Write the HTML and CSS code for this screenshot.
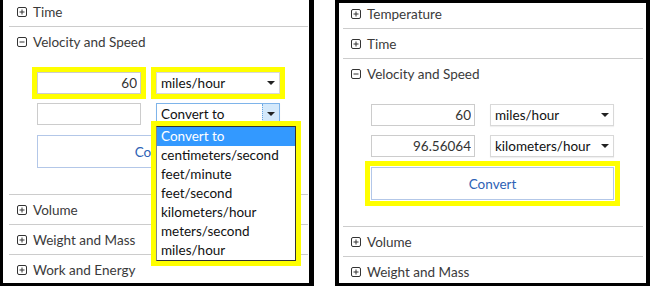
FILE: index.html
```html
<!DOCTYPE html>
<html lang="en">
<head>
  <meta charset="UTF-8">
  <title>Unit Converter - Velocity and Speed</title>
  <link rel="stylesheet" href="styles.css">
</head>
<body>

<div class="shots">

  <!-- before: choosing the target unit -->
  <div class="panel panel-left">
    <div class="accordion">
      <div class="section">
        <div class="head">
          <svg class="icon" viewBox="0 0 10 10"><rect x="0.5" y="0.5" width="9" height="9" rx="1.5"/><path d="M2.5 5h5M5 2.5v5"/></svg>
          Time
        </div>
      </div>
      <div class="section open">
        <div class="head">
          <svg class="icon" viewBox="0 0 10 10"><rect x="0.5" y="0.5" width="9" height="9" rx="1.5"/><path d="M2.5 5h5"/></svg>
          Velocity and Speed
        </div>
        <div class="body">
          <div class="fields">
            <input class="num mark" type="text" value="60">
            <div class="select mark"><span>miles/hour</span><i class="caret"></i></div>
            <input class="num" type="text" value="">
            <div class="select focus">
              <span>Convert to</span><i class="caret"></i>
              <ul class="options">
                <li class="active">Convert to</li>
                <li>centimeters/second</li>
                <li>feet/minute</li>
                <li>feet/second</li>
                <li>kilometers/hour</li>
                <li>meters/second</li>
                <li>miles/hour</li>
              </ul>
            </div>
            <button class="convert" type="button">Convert</button>
          </div>
        </div>
      </div>
      <div class="section">
        <div class="head">
          <svg class="icon" viewBox="0 0 10 10"><rect x="0.5" y="0.5" width="9" height="9" rx="1.5"/><path d="M2.5 5h5M5 2.5v5"/></svg>
          Volume
        </div>
      </div>
      <div class="section">
        <div class="head">
          <svg class="icon" viewBox="0 0 10 10"><rect x="0.5" y="0.5" width="9" height="9" rx="1.5"/><path d="M2.5 5h5M5 2.5v5"/></svg>
          Weight and Mass
        </div>
      </div>
      <div class="section">
        <div class="head">
          <svg class="icon" viewBox="0 0 10 10"><rect x="0.5" y="0.5" width="9" height="9" rx="1.5"/><path d="M2.5 5h5M5 2.5v5"/></svg>
          Work and Energy
        </div>
      </div>
    </div>
  </div>

  <!-- after: result shown -->
  <div class="panel panel-right">
    <div class="accordion">
      <div class="section">
        <div class="head">
          <svg class="icon" viewBox="0 0 10 10"><rect x="0.5" y="0.5" width="9" height="9" rx="1.5"/><path d="M2.5 5h5M5 2.5v5"/></svg>
          Temperature
        </div>
      </div>
      <div class="section">
        <div class="head">
          <svg class="icon" viewBox="0 0 10 10"><rect x="0.5" y="0.5" width="9" height="9" rx="1.5"/><path d="M2.5 5h5M5 2.5v5"/></svg>
          Time
        </div>
      </div>
      <div class="section open">
        <div class="head">
          <svg class="icon" viewBox="0 0 10 10"><rect x="0.5" y="0.5" width="9" height="9" rx="1.5"/><path d="M2.5 5h5"/></svg>
          Velocity and Speed
        </div>
        <div class="body">
          <div class="fields">
            <input class="num" type="text" value="60">
            <div class="select"><span>miles/hour</span><i class="caret"></i></div>
            <input class="num" type="text" value="96.56064">
            <div class="select"><span>kilometers/hour</span><i class="caret"></i></div>
            <button class="convert mark" type="button">Convert</button>
          </div>
        </div>
      </div>
      <div class="section">
        <div class="head">
          <svg class="icon" viewBox="0 0 10 10"><rect x="0.5" y="0.5" width="9" height="9" rx="1.5"/><path d="M2.5 5h5M5 2.5v5"/></svg>
          Volume
        </div>
      </div>
      <div class="section">
        <div class="head">
          <svg class="icon" viewBox="0 0 10 10"><rect x="0.5" y="0.5" width="9" height="9" rx="1.5"/><path d="M2.5 5h5M5 2.5v5"/></svg>
          Weight and Mass
        </div>
      </div>
    </div>
  </div>

</div>

</body>
</html>
```

FILE: styles.css
```css
body {
  margin: 0;
  background: #fff;
  font-family: "Lato", "Liberation Sans", sans-serif;
  font-size: 13.5px;
  color: #333;
}

.shots {
  display: flex;
  height: 286px;
  overflow: hidden;
}

.panel {
  box-sizing: border-box;
  height: 286px;
  overflow: hidden;
  background: #fff;
  border: 0 solid #000;
}

.panel-left {
  width: 314px;
  margin-right: 21px;
  border-width: 0 5px 3px 3px;
  padding: 0 1px 0 6px;
}

.panel-left .accordion {
  margin-top: -3px;
}

.panel-right {
  width: 315px;
  border-width: 3px 4px 3px 4px;
  padding: 0 3px 0 4px;
}

.panel-right .accordion {
  margin-top: -4px;
}

.section {
  border-bottom: 1px solid #ccc;
}

.head {
  display: flex;
  align-items: center;
  height: 29px;
  padding-left: 8px;
  color: #3a3a3a;
}

.icon {
  width: 10px;
  height: 10px;
  margin-right: 6px;
  fill: none;
  stroke: #333;
  stroke-width: 1;
}

.body {
  padding: 16px 0 26px 28px;
}

.fields {
  display: grid;
  grid-template-columns: 104px 124px;
  column-gap: 15px;
  row-gap: 9px;
}

.num {
  box-sizing: border-box;
  height: 22px;
  margin: 0;
  padding: 0 3px;
  border: 1px solid #ccc;
  font-family: inherit;
  font-size: 13.5px;
  color: #333;
  text-align: right;
  background: #fff;
}

.select {
  position: relative;
  box-sizing: border-box;
  height: 22px;
  display: flex;
  align-items: center;
  justify-content: space-between;
  padding-left: 4px;
  border: 1px solid #d8d8d8;
  box-shadow: 0 1px 1px rgba(0,0,0,0.06);
  color: #111;
  background: #fff;
  white-space: nowrap;
}

.caret {
  flex: none;
  width: 16px;
  align-self: stretch;
  display: flex;
  align-items: center;
  justify-content: center;
}

.caret::after {
  content: "";
  border-left: 4px solid transparent;
  border-right: 4px solid transparent;
  border-top: 4px solid #222;
}

.select.focus {
  border-color: #7eb4ea;
}

.select.focus .caret {
  background: #d4e9fb;
  border-left: 1px dotted #6aa6e2;
}

.options {
  position: absolute;
  top: 22px;
  left: -1px;
  z-index: 2;
  width: 140px;
  margin: 0;
  padding: 0;
  list-style: none;
  box-sizing: border-box;
  border: 1px solid #333;
  border-left-color: #888;
  background: #fff;
  outline: 5px solid #ff0;
}

.options li {
  height: 19px;
  line-height: 19px;
  padding-left: 4px;
  color: #111;
  white-space: nowrap;
}

.options li.active {
  background: #3399ff;
  color: #fff;
}

.convert {
  grid-column: 1 / span 2;
  height: 33px;
  margin: 1px 0 0;
  border: 1px solid #b3c7e8;
  background: #fff;
  font-family: inherit;
  font-size: 13.5px;
  color: #2d62b5;
}

.mark {
  outline: 5px solid #ff0;
}

.convert.mark {
  outline-offset: 1px;
}
```
